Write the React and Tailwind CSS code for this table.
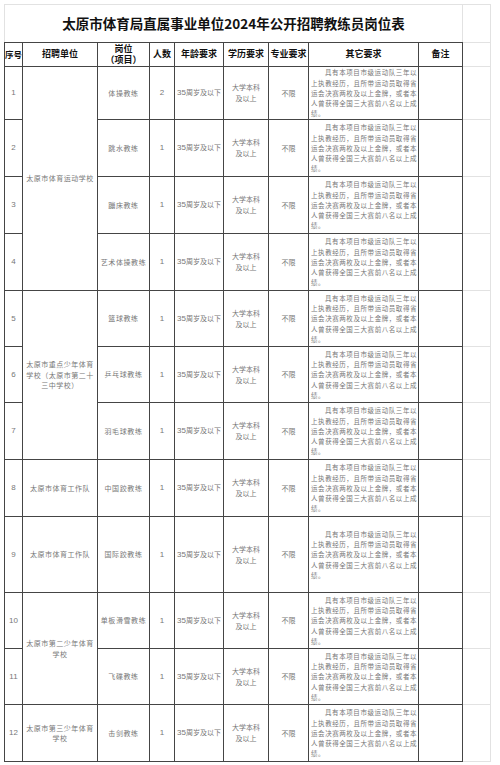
import React from "react";

const FONT = { fontFamily: '"Noto Sans CJK SC", "Noto Sans", sans-serif' };
const OTHER =
  "具有本项目市级运动队三年以上执教经历，且所带运动员取得省运会决赛两枚及以上金牌，或者本人曾获得全国三大赛前八名以上成绩。";

const rows = [
  { n: "1", unit: ["太原市体育运动学校"], span: "row-span-4", post: "体操教练", num: "2" },
  { n: "2", post: "跳水教练", num: "1" },
  { n: "3", post: "蹦床教练", num: "1" },
  { n: "4", post: "艺术体操教练", num: "1" },
  { n: "5", unit: ["太原市重点少年体育", "学校（太原市第二十", "三中学校）"], span: "row-span-3", post: "篮球教练", num: "1" },
  { n: "6", post: "乒乓球教练", num: "1" },
  { n: "7", post: "羽毛球教练", num: "1" },
  { n: "8", unit: ["太原市体育工作队"], span: "", post: "中国跤教练", num: "1" },
  { n: "9", unit: ["太原市体育工作队"], span: "", post: "国际跤教练", num: "1" },
  { n: "10", unit: ["太原市第二少年体育", "学校"], span: "row-span-2", post: "单板滑雪教练", num: "1" },
  { n: "11", post: "飞碟教练", num: "1" },
  { n: "12", unit: ["太原市第三少年体育", "学校"], span: "", post: "击剑教练", num: "1" },
];

const rightHeights = ["h-[24px]", "h-[53px]", "h-[57px]", "h-[57px]", "h-[57px]", "h-[56px]", "h-[56px]", "h-[57px]", "h-[57px]", "h-[76px]", "h-[56px]", "h-[56px]", "h-[57px]"];

function Cell({ children, className = "" }) {
  return (
    <div className={"bg-white flex items-center justify-center text-center " + className}>
      {children}
    </div>
  );
}

function Head({ children }) {
  return (
    <Cell className="text-[9px] font-bold text-[#111] leading-[10.5px] whitespace-nowrap">{children}</Cell>
  );
}

export default function App() {
  return (
    <div className="w-[500px] h-[765px] bg-white pt-[4px] pl-[4px] flex" style={FONT}>
      <div className="w-[459px] flex flex-col">
        <div className="h-[38px] border-t border-l border-r border-[#e2e2e2] flex items-center justify-center">
          <span className="text-[13.5px] font-bold text-[#111]">
            太原市体育局直属事业单位2024年公开招聘教练员岗位表
          </span>
        </div>
        <div className="grid grid-cols-[17px_74px_51px_24px_48px_44px_39px_109px_43px] grid-rows-[23px_52px_56px_56px_56px_55px_55px_56px_56px_75px_55px_55px_56px] gap-px p-px bg-[#454545]">
          <Head><span className="text-[8.5px]">序号</span></Head>
          <Head>招聘单位</Head>
          <Head>
            <span>
              岗位
              <br />
              （项目）
            </span>
          </Head>
          <Head>人数</Head>
          <Head>年龄要求</Head>
          <Head>学历要求</Head>
          <Head>专业要求</Head>
          <Head>其它要求</Head>
          <Head>备注</Head>
          {rows.map((r) => (
            <React.Fragment key={r.n}>
              <Cell className="text-[8px] text-[#777]">
                <span style={{ fontFamily: '"Liberation Sans", sans-serif' }}>{r.n}</span>
              </Cell>
              {r.unit && (
                <Cell className={"text-[7px] tracking-[0.5px] leading-[10.5px] text-[#777] " + r.span}>
                  <span>
                    {r.unit.map((l, i) => (
                      <React.Fragment key={i}>
                        {i > 0 && <br />}
                        {l}
                      </React.Fragment>
                    ))}
                  </span>
                </Cell>
              )}
              <Cell className="text-[7px] tracking-[0.6px] text-[#777] whitespace-nowrap">{r.post}</Cell>
              <Cell className="text-[8px] text-[#777]">
                <span style={{ fontFamily: '"Liberation Sans", sans-serif' }}>{r.num}</span>
              </Cell>
              <Cell className="text-[7px] text-[#777] whitespace-nowrap">
                <span>
                  <span className="text-[8px]" style={{ fontFamily: '"Liberation Sans", sans-serif' }}>35</span>周岁及以下
                </span>
              </Cell>
              <Cell className="text-[7px] leading-[11px] text-[#777]">
                <span>
                  大学本科
                  <br />
                  及以上
                </span>
              </Cell>
              <Cell className="text-[7px] text-[#777]">不限</Cell>
              <div className="bg-white flex items-center pl-[2px] pr-[1px]">
                <p className="text-[6.5px] tracking-[0.5px] leading-[10.3px] text-[#777] text-justify indent-[14px]">
                  {OTHER}
                </p>
              </div>
              <Cell />
            </React.Fragment>
          ))}
        </div>
      </div>
      <div className="w-[28px] flex flex-col border-r border-[#e2e2e2] self-start">
        <div className="h-[39px] border-t border-b border-[#e2e2e2]" />
        {rightHeights.map((h, i) => (
          <div key={i} className={h + " border-b border-[#e2e2e2]"} />
        ))}
      </div>
    </div>
  );
}
